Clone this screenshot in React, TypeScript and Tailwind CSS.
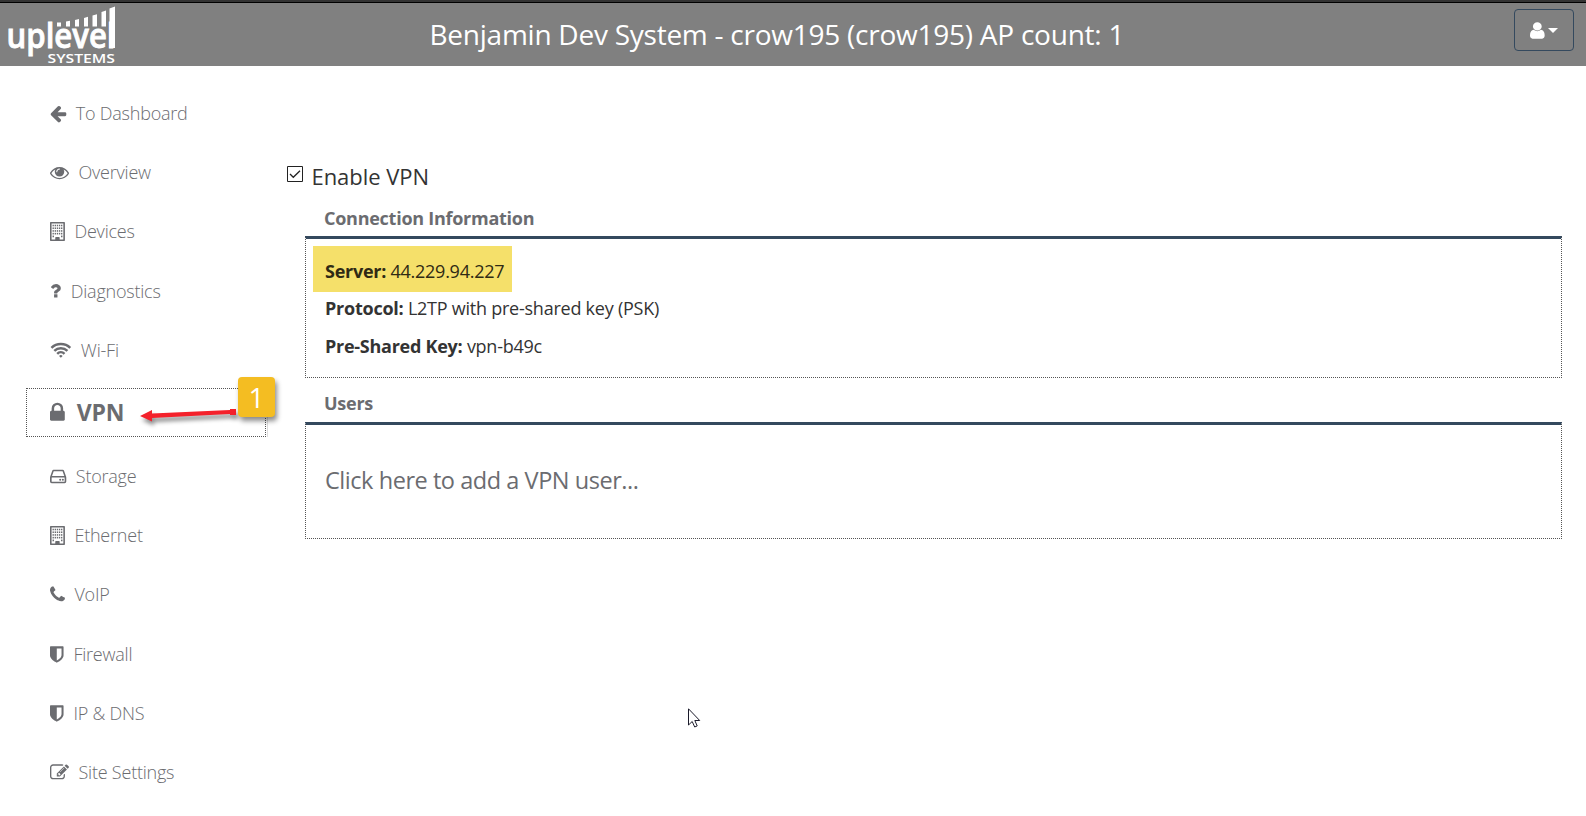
import React from "react";

type IconProps = { w: number; size: number; children: React.ReactNode };

function Glyph({ w, size, children }: IconProps) {
  return (
    <svg width={(w / 1792) * size} height={size} viewBox={`0 0 ${w} 1792`} fill="currentColor" className="shrink-0 overflow-visible">
      {children}
    </svg>
  );
}

const building = (
  <>
    <path fillRule="evenodd" d="M64 0h1280q64 0 64 64v1664q0 64-64 64H64q-64 0-64-64V64Q0 0 64 0zM150 150v1492h362v-170q0-64 64-64h256q64 0 64 64v170h362V150z" />
    {[256, 512, 768, 1024].map((y) =>
      [240, 440, 640, 840, 1040].map((x) => <rect key={`${x}-${y}`} x={x} y={y} width="125" height="150" />)
    )}
    <rect x="240" y="1280" width="135" height="160" />
    <rect x="1040" y="1280" width="135" height="160" />
    <rect x="530" y="1440" width="350" height="260" />
  </>
);

const shield = (
  <path d="M1088 960v-640h-448v1137q119 -63 213 -137q235 -184 235 -360zM1280 192v768q0 86 -33.5 170.5t-83 150t-118 127.5t-126.5 103t-121 77.5t-89.5 49.5t-42.5 20q-12 6 -26 6t-26 -6q-16 -7 -42.5 -20t-89.5 -49.5t-121 -77.5t-126.5 -103t-118 -127.5t-83 -150t-33.5 -170.5v-768q0 -26 19 -45t45 -19h1152q26 0 45 19t19 45z" />
);

const items: { label: string; w: number; icon: React.ReactNode }[] = [
  { label: "To Dashboard", w: 1536, icon: <path d="M1536 896v128q0 53 -32.5 90.5t-84.5 37.5h-704l293 294q38 36 38 90t-38 90l-75 76q-37 37 -90 37q-52 0 -91 -37l-651 -652q-37 -37 -37 -90q0 -52 37 -91l651 -650q38 -38 91 -38q52 0 90 38l75 74q38 38 38 91t-38 91l-293 293h704q52 0 84.5 37.5t32.5 90.5z" /> },
  { label: "Overview", w: 1792, icon: <path d="M1664 960q-152 -236 -381 -353q61 104 61 225q0 185 -131.5 316.5t-316.5 131.5t-316.5 -131.5t-131.5 -316.5q0 -121 61 -225q-229 117 -381 353q133 205 333.5 326.5t434.5 121.5t434.5 -121.5t333.5 -326.5zM944 576q0 -20 -14 -34t-34 -14q-125 0 -214.5 89.5t-89.5 214.5q0 20 14 34t34 14t34 -14t14 -34q0 -86 61 -147t147 -61q20 0 34 -14t14 -34zM1792 960q0 34 -20 69q-140 230 -376.5 368.5t-499.5 138.5t-499.5 -139t-376.5 -368q-20 -35 -20 -69t20 -69q140 -229 376.5 -368t499.5 -139t499.5 139t376.5 368q20 35 20 69z" /> },
  { label: "Devices", w: 1408, icon: building },
  { label: "Diagnostics", w: 1060, icon: <path d="M704 1192v240q0 16 -12 28t-28 12h-240q-16 0 -28 -12t-12 -28v-240q0 -16 12 -28t28 -12h240q16 0 28 12t12 28zM1020 592q0 54 -15.5 101t-35 76.5t-55 59.5t-57.5 43.5t-61 35.5q-41 23 -68.5 65t-27.5 67q0 17 -12 32.5t-28 15.5h-240q-15 0 -25.5 -18.5t-10.5 -37.5v-45q0 -83 65 -156.5t143 -108.5q59 -27 84 -56t25 -76q0 -42 -46.5 -74t-107.5 -32q-65 0 -108 29q-35 25 -107 115q-13 16 -31 16q-12 0 -25 -8l-164 -125q-13 -10 -15.5 -25t5.5 -28q160 -266 464 -266q80 0 161 31t146 83t106 127.5t41 158.5z" /> },
  { label: "Wi-Fi", w: 2010, icon: (
    <>
      <path d="M1024 1580l-170-170a240 240 0 0 1 340 0z" />
      <g fill="none" stroke="currentColor" strokeWidth="235">
        <path d="M680 1210a490 490 0 0 1 688 0" />
        <path d="M405 925a890 890 0 0 1 1238 0" />
        <path d="M135 645a1280 1280 0 0 1 1778 0" />
      </g>
    </>
  ) },
  { label: "VPN", w: 1152, icon: <path d="M320 768h512v-192q0 -106 -75 -181t-181 -75t-181 75t-75 181v192zM1152 864v576q0 40 -28 68t-68 28h-960q-40 0 -68 -28t-28 -68v-576q0 -40 28 -68t68 -28h32v-192q0 -184 132 -316t316 -132t316 132t132 316v192h32q40 0 68 28t28 68z" /> },
  { label: "Storage", w: 1536, icon: (
    <>
      <path fillRule="evenodd" d="M330 256h876q80 0 110 85l200 560q20 50 20 110v365q0 160-160 160H160q-160 0-160-160v-365q0-60 20-110l200-560q30-85 110-85zM350 410L190 850h1156L1186 410zM155 1020v340q0 22 22 22h1182q22 0 22-22v-340q0-18-22-18H177q-22 0-22 18z" />
      <circle cx="960" cy="1200" r="95" />
      <circle cx="1216" cy="1200" r="95" />
    </>
  ) },
  { label: "Ethernet", w: 1408, icon: building },
  { label: "VoIP", w: 1408, icon: <path d="M1408 1240q0 27 -10 70.5t-21 68.5q-21 50 -122 106q-94 51 -186 51q-27 0 -52.5 -3.5t-57.5 -12.5t-47.5 -14.5t-55.5 -20.5t-49 -18q-98 -35 -175 -83q-128 -79 -264.5 -215.5t-215.5 -264.5q-48 -77 -83 -175q-3 -9 -18 -49t-20.5 -55.5t-14.5 -47.5t-12.5 -57.5t-3.5 -52.5q0 -92 51 -186q56 -101 106 -122q25 -11 68.5 -21t70.5 -10q14 0 21 3q18 6 53 76q11 19 30 54t35 63.5t31 53.5q3 4 17.5 25t21.5 35.5t7 28.5q0 20 -28.5 50t-62 55t-62 53t-28.5 46q0 9 5 22.5t8.5 20.5t14 24t11.5 19q76 137 174 235t235 174q2 1 19 11.5t24 14t20.5 8.5t22.5 5q18 0 46 -28.5t53 -62t55 -62t50 -28.5q14 0 28.5 7t35.5 21.5t25 17.5q25 15 53.5 31t63.5 35t54 30q70 35 76 53q3 7 3 21z" /> },
  { label: "Firewall", w: 1310, icon: shield },
  { label: "IP & DNS", w: 1310, icon: shield },
  { label: "Site Settings", w: 1792, icon: <path d="M888 1184l116 -116l-152 -152l-116 116v56h96v96h56zM1328 464q-16 -16 -33 1l-350 350q-17 17 -1 33t33 -1l350 -350q17 -17 1 -33zM1408 1058v190q0 119 -84.5 203.5t-203.5 84.5h-832q-119 0 -203.5 -84.5t-84.5 -203.5v-832q0 -119 84.5 -203.5t203.5 -84.5h832q63 0 117 25q15 7 18 23q3 17 -9 29l-49 49q-14 14 -32 8q-23 -6 -45 -6h-832q-66 0 -113 47t-47 113v832q0 66 47 113t113 47h832q66 0 113 -47t47 -113v-126q0 -13 9 -22l64 -64q15 -15 35 -7t20 29zM1312 320l288 288l-672 672h-288v-288zM1756 452l-92 92l-288 -288l92 -92q28 -28 68 -28t68 28l152 152q28 28 28 68t-28 68z" /> },
];

function Logo() {
  return (
    <svg width="125" height="63" viewBox="0 3 125 63" fill="#fff" className="shrink-0 overflow-visible">
      <text x="6.500" y="48" fontFamily="Open Sans" fontWeight="600" fontSize="34.500" stroke="#fff" strokeWidth="0.800" textLength="109" lengthAdjust="spacingAndGlyphs">uplevel</text>
      <text x="47.500" y="62.500" fontFamily="Open Sans" fontWeight="600" fontSize="13" textLength="67.500" lengthAdjust="spacingAndGlyphs">SYSTEMS</text>
      <path d="M57 22.500h4v4h-4zM66 21.500l4-.8v5.800h-4zM75 20l4-1v7.500h-4zM84 18l4-1.200v9.700h-4zM92.500 15.500l4.500-1.300v12.300h-4.500zM101.500 12l4.500-1.600v16.100h-4.500zM109.500 8.500l5.500-2V48h-5.500z" />
    </svg>
  );
}

export default function App() {
  return (
    <div className="relative h-[816px] w-full overflow-hidden bg-white font-['Open_Sans',sans-serif] text-[#333]">
      <header className="flex h-[66px] items-start border-t-2 border-[#333] bg-[#808080]">
        <div className="flex h-16 w-full items-start border-t border-black">
          <Logo />
          <h1 className="ml-[304.500px] mt-[10px] flex-1 whitespace-nowrap text-[28px] leading-[42px] tracking-[-0.245px] text-white">Benjamin Dev System - crow195 (crow195) AP count: 1</h1>
          <button className="mr-3 mt-[6px] flex h-[42px] w-[60px] items-center justify-center gap-1 rounded border border-[#34495e] text-white">
            <Glyph w={1408} size={19}>
              <path transform="scale(1.08 1)" d="M1280 1399q0 109 -62.5 187t-150.5 78h-854q-88 0 -150.5 -78t-62.5 -187q0 -85 8.5 -160.5t31.5 -152t58.500 -131t94 -89t134.5 -34.5q131 128 313 128t313 -128q76 0 134.5 34.5t94 89t58.5 131t31.5 152t8.5 160.5zM1024 512q0 159 -112.500 271.500t-271.500 112.500t-271.500 -112.500t-112.500 -271.500t112.500 -271.500t271.500 -112.500t271.500 112.500t112.500 271.500z" />
            </Glyph>
            <svg width="10" height="5" viewBox="0 0 10 5" fill="currentColor"><path d="M0 0h10L5 5z" /></svg>
          </button>
        </div>
      </header>

      <div className="flex">
        <nav className="w-[305px] shrink-0 pl-[26px] pt-[17px] text-[#6b6c70]">
          {items.map((it) =>
            it.label === "VPN" ? (
              <div key={it.label} className="flex h-[66.500px] items-center pb-px">
                <div className="flex h-[49px] w-[240px] items-center border border-dotted border-[#555] pl-[23px]">
                  <Glyph w={it.w} size={23}>{it.icon}</Glyph>
                  <span className="ml-3 text-[23px] font-bold tracking-[-0.2px]">{it.label}</span>
                </div>
                <span className="ml-[1px] mt-[24px] h-[25px] w-px bg-[#ddd]" />
              </div>
            ) : (
              <div key={it.label} className="flex h-[59.300px] items-center pl-[23.500px]">
                <span className="mt-[1px] flex"><Glyph w={it.w} size={19}>{it.icon}</Glyph></span>
                <span className="ml-[10px] whitespace-nowrap text-lg font-light tracking-[-0.22px]">{it.label}</span>
              </div>
            )
          )}
        </nav>

        <main className="mr-6 flex-1">
          <label className="-ml-[18px] mt-[93px] flex h-9 items-start gap-[8.500px]">
            <svg width="16" height="16" viewBox="0 0 16 16" fill="none" stroke="#222" className="mt-[7px]">
              <path d="M.5.5h15v15H.5z" />
              <path strokeWidth="1.300" d="M3 8l3.300 3.300L13 4.700" />
            </svg>
            <span className="text-[22px] leading-[34px] tracking-[-0.05px]">Enable VPN</span>
          </label>
          <h2 className="flex h-[41px] items-center pl-[19px] pt-[5px] text-lg font-bold tracking-[-0.26px] text-[#6b6c70]">Connection Information</h2>
          <section className="h-[142px] border border-t-[3px] border-dotted border-[#555] [border-top-color:#34495e] [border-top-style:solid] pl-[7px] pt-[7px] text-lg tracking-[-0.26px]">
            <p className="flex h-[46px] w-[199px] items-center whitespace-pre bg-[#f5e06a] pl-3 pt-[3px] text-[#2f2a14]"><b>Server:</b> 44.229.94.227</p>
            <p className="h-[38px] pl-3 leading-[32px] tracking-[-0.24px]"><b>Protocol:</b> L2TP with pre-shared key (PSK)</p>
            <p className="pl-3 leading-[32px]"><b>Pre-Shared Key:</b> vpn-b49c</p>
          </section>
          <h2 className="flex h-[44px] items-center pl-[19px] pt-[5px] text-lg font-bold tracking-[-0.26px] text-[#6b6c70]">Users</h2>
          <section className="flex h-[117px] items-center border border-t-[3px] border-dotted border-[#555] [border-top-color:#34495e] [border-top-style:solid] pb-px pl-[19px] text-[23.500px] tracking-[-0.450px] text-[#6b6c70]">Click here to add a VPN user...</section>
        </main>
      </div>

      <svg className="absolute left-[130px] top-[400px] overflow-visible" width="110" height="30" viewBox="0 0 110 30" fill="#f4212b">
        <g style={{ filter: "drop-shadow(2px 4px 2px rgba(0,0,0,.45))" }}>
          <path d="M10 16L22 10v3.500L100 10V9h6v6h-6v-1L22 18v3.500z" />
        </g>
      </svg>
      <div className="absolute left-[238px] top-[377px] flex h-10 w-[37px] items-center justify-center rounded-sm bg-[#f4bd22] text-[28px] text-white shadow-[2px_4px_5px_rgba(0,0,0,.45)]">1</div>

      <svg className="absolute left-[688px] top-[707.500px]" width="13" height="20" viewBox="0 0 13 20" fill="#fff" stroke="#1a1a2a">
        <path d="M.5.8v16.200l3.700-3.500 2.500 5.500 2.500-1.100-2.400-5.400h4.900z" />
      </svg>
    </div>
  );
}
